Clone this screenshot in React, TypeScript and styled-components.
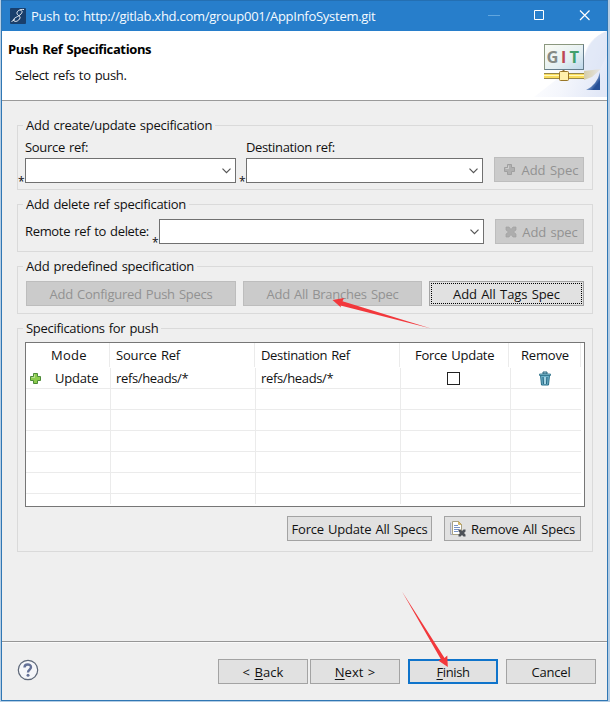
import React from "react";
import styled, { createGlobalStyle, css } from "styled-components";

const GlobalStyle = createGlobalStyle`
  * { box-sizing: border-box; }
  body { margin: 0; background: #b4cde4; }
`;

const Text = styled.span<{ $ls?: number; $ws?: number }>`
  font: 13px/18px "Open Sans", "Noto Sans", sans-serif;
  letter-spacing: ${(p) => p.$ls ?? 0}px;
  word-spacing: ${(p) => p.$ws ?? 1}px;
  white-space: pre;
`;

const Page = styled.div`
  position: relative;
  width: 610px;
  height: 702px;
  padding: 0 2px 1px 1px;
  overflow: hidden;
  color: #111;
`;

const Window = styled.div`
  display: flex;
  flex-direction: column;
  height: 701px;
  border: 1px solid #3077b4;
  border-top-color: #246fb2;
  background: #efefef;
`;

const TitleBar = styled.header`
  display: flex;
  align-items: center;
  flex: none;
  height: 30px;
  padding-left: 8px;
  background: #277ecb;
  color: #f4faff;
  svg { flex: none; }
`;

const TitleText = styled(Text)`
  flex: 1;
  margin-left: 5px;
`;

const WindowControls = styled.div`
  display: flex;
  align-items: center;
  width: 121px;
`;

const Banner = styled.section`
  display: flex;
  justify-content: space-between;
  flex: none;
  height: 70px;
  background: #fff;
  border-bottom: 1px solid #9a9a9a;
`;

const BannerText = styled.div`
  display: flex;
  flex-direction: column;
  gap: 8px;
  padding: 9px 0 0 6px;
`;

const Heading = styled(Text)`
  font-weight: 700;
  color: #000;
`;

const Subtitle = styled(Text)`
  padding-left: 7px;
`;

const Body = styled.main`
  display: flex;
  flex-direction: column;
  flex: 1;
  padding: 24px 14px 0 15px;
`;

const Group = styled.fieldset<{ $height: number; $gap?: number }>`
  position: relative;
  flex: none;
  height: ${(p) => p.$height}px;
  margin: 0 0 ${(p) => p.$gap ?? 0}px;
  padding: 0 8px 0 0;
  border: 1px solid #dadada;
  min-width: 0;
`;

const Legend = styled(Text)`
  position: absolute;
  top: -10px;
  left: 5px;
  padding: 0 3px;
  background: #efefef;
`;

const FieldRow = styled.div<{ $top: number }>`
  display: flex;
  align-items: flex-end;
  padding-top: ${(p) => p.$top}px;
`;

const Field = styled.div<{ $width: number; $ml?: number }>`
  display: flex;
  flex-direction: column;
  width: ${(p) => p.$width}px;
  margin-left: ${(p) => p.$ml ?? 0}px;
`;

const FieldLabel = styled(Text)`
  height: 20px;
  padding-left: 7px;
`;

const InlineLabel = styled(Text)`
  width: 134px;
  height: 22px;
  padding-left: 7px;
`;

const ComboRow = styled.div`
  display: flex;
  align-items: flex-end;
  flex: 1;
`;

const Required = styled.span`
  flex: none;
  width: 7px;
  height: 9px;
  font: 12px/16px "Open Sans", sans-serif;
`;

const Combo = styled.div`
  display: flex;
  align-items: center;
  justify-content: flex-end;
  flex: 1;
  height: 25px;
  padding-right: 4px;
  background: #fff;
  border: 1px solid #707070;
`;

const Button = styled.button<{ $width: number; $ml?: number; $raise?: boolean; $icon?: boolean; $focus?: boolean; $primary?: boolean }>`
  display: flex;
  align-items: center;
  justify-content: center;
  flex: none;
  width: ${(p) => p.$width}px;
  height: 25px;
  margin: 0 0 ${(p) => (p.$raise ? 1 : 0)}px ${(p) => p.$ml ?? 0}px;
  padding: 0 0 0 ${(p) => (p.$icon ? 4 : 0)}px;
  background: #e1e1e1;
  border: 1px solid #a3a3a3;
  color: #111;
  &:disabled {
    background: #cbcbcb;
    border-color: #bdbdbd;
    color: #929292;
  }
  ${(p) => p.$focus && css`
    outline: 1px dotted #000;
    outline-offset: -3px;
  `}
  ${(p) => p.$primary && css`
    border: 2px solid #0f74cb;
  `}
  svg { flex: none; margin-right: 5px; }
`;

const Mnemonic = styled.u`
  text-underline-offset: 2px;
  text-decoration-thickness: 1px;
`;

const Table = styled.div`
  width: 560px;
  height: 165px;
  margin: 13px 0 0 7px;
  background: #fff;
  border: 1px solid #767676;
`;

const Row = styled.div<{ $head?: boolean }>`
  display: grid;
  grid-template-columns: ${(p) => (p.$head ? "84px 145px 145px 109px 72px" : "85px 145px 145px 110px")} 1fr;
  height: ${(p) => (p.$head ? 25 : 21)}px;
  margin-right: 3px;
  border-bottom: 1px solid ${(p) => (p.$head ? "transparent" : "#ebebeb")};
  &:last-child { height: 10px; border-bottom: 0; }
`;

const Cell = styled.div<{ $pl?: number; $last?: boolean }>`
  display: flex;
  align-items: center;
  padding-left: ${(p) => p.$pl ?? 6}px;
  border-right: ${(p) => (p.$last ? "0" : "1px solid #ebebeb")};
  svg { flex: none; }
`;

const UpdateText = styled(Text)`
  margin-left: 13px;
`;

const CheckBox = styled.div`
  width: 13px;
  height: 13px;
  border: 1px solid #222;
  background: #fff;
`;

const TableActions = styled.div`
  display: flex;
  justify-content: flex-end;
  margin-top: 9px;
  padding-right: 3px;
`;

const Footer = styled.footer`
  display: flex;
  align-items: center;
  flex: none;
  height: 59px;
  padding: 1px 11px 0 15px;
  border-top: 1px solid #969696;
  box-shadow: inset 0 1px #fafafa;
`;

const HelpLink = styled.div`
  display: flex;
  flex: 1;
  padding-bottom: 3px;
`;

const Pointers = styled.svg`
  position: absolute;
  inset: 0;
  pointer-events: none;
`;

const AppIcon = () => (
  <svg width="16" height="16" viewBox="0 0 16 16" fill="none">
    <rect width="16" height="16" rx="1" fill="#193f6c" />
    <path d="M14 1.500C10 1 6.500 3 7 5.500S11.500 8 9.500 11 4 14 3.500 12 9 8.500 11 6 12 2.500 10.500 2.500M5 11.500L1.500 13.500" stroke="#e8eef6" strokeWidth="1" />
  </svg>
);

const Chevron = () => (
  <svg width="9" height="6" viewBox="0 0 9 6" fill="none" stroke="#555" strokeWidth="1.200">
    <path d="M.5 .7 4.500 4.700 8.500 .7" />
  </svg>
);

const Plus = ({ fill, stroke }: { fill: string; stroke: string }) => (
  <svg width="13" height="13" viewBox="0 0 13 13">
    <path d="M4.500 1.500h4v3h3v4h-3v3h-4v-3h-3v-4h3z" fill={fill} stroke={stroke} />
    <path d="M5.500 2.500v3h-3" fill="none" stroke="#fff" strokeOpacity=".4" />
  </svg>
);

const Cross = () => (
  <svg width="12" height="12" viewBox="0 0 12 12">
    <path d="M1 1h3l2 2.500L8 1h3v3L8.500 6 11 8v3H8L6 8.500 4 11H1V8l2.500-2L1 4z" fill="#adadad" stroke="#a2a2a2" strokeWidth=".7" />
  </svg>
);

const GitBanner = () => (
  <svg width="73" height="69" viewBox="0 0 73 69">
    <defs>
      <linearGradient id="card" x1="0" y1="0" x2="1" y2="1">
        <stop offset="0" stopColor="#fbfcf4" /><stop offset=".6" stopColor="#e4eff2" /><stop offset="1" stopColor="#bcd6ea" />
      </linearGradient>
      <linearGradient id="wash" x1="0" y1=".3" x2="1" y2=".6">
        <stop offset="0" stopColor="#fff" /><stop offset=".5" stopColor="#f4f6fc" /><stop offset="1" stopColor="#e2e8f7" />
      </linearGradient>
      <linearGradient id="fold" x1="0" y1="0" x2="1" y2="1">
        <stop offset=".4" stopColor="#a9c2e6" /><stop offset=".75" stopColor="#254f96" />
      </linearGradient>
      <linearGradient id="shade" x1="0" y1="0" x2="1" y2="0">
        <stop offset="0" stopColor="#d5cda8" /><stop offset="1" stopColor="#e6e6e8" />
      </linearGradient>
    </defs>
    <path d="M73 0C60 5 52 14 50 27L0 66h73z" fill="url(#wash)" />
    <path d="M73 0C60 5 52 16 50 30v12l16-4 7-14z" fill="#dce4f5" opacity=".6" />
    <path d="M50 40l17-2-9 8-8 3z" fill="url(#shade)" />
    <rect x="10.500" y="13.500" width="39" height="25" fill="url(#card)" stroke="#8b987f" />
    <path d="M11 38.500h38.500v-25" fill="none" stroke="#647c8b" />
    <text x="12.500" y="32" fontFamily="Open Sans" fontSize="16.500" fontWeight="700" fill="#858a85">G</text>
    <text x="27.300" y="32" fontFamily="Liberation Sans" fontSize="17" fontWeight="700" fill="#bd4655">I</text>
    <text x="35.500" y="32" fontFamily="Open Sans" fontSize="16.500" fontWeight="700" fill="#42a06d">T</text>
    <path d="M10 42.500h40M10 47.500h40" stroke="#97884b" />
    <path d="M10 45h40" stroke="#f9dc5c" strokeWidth="4" />
    <path d="M10 44.500h40" stroke="#fffac0" />
    <path d="M29.500 39v2" stroke="#8d7744" strokeWidth="2" />
    <rect x="25.500" y="40.500" width="9" height="9" rx="1" fill="#fff0ac" stroke="#997627" />
    <path d="M66 41v18H52q11-5 14-18z" fill="url(#fold)" />
  </svg>
);

const Trash = () => (
  <svg width="12" height="15" viewBox="0 0 12 15">
    <path d="M4 1h4v2H4z" fill="#b9dce8" stroke="#24637b" />
    <path d="M1.500 4h9L9.500 14h-7z" fill="#6eb4cc" stroke="#286d87" />
    <path d="M.5 3h11v1.500H.5z" fill="#8fcbdc" stroke="#2b6d85" strokeWidth=".8" />
    <path d="M4 6l.4 7M8 6l-.4 7" stroke="#205c78" />
    <path d="M6 6v7" stroke="#d9f1f7" />
  </svg>
);

const RemoveDocs = () => (
  <svg width="16" height="16" viewBox="0 0 16 16">
    <path d="M.5 1.500v12H8" fill="none" stroke="#a5acc2" />
    <path d="M2.500.5h6l3 3v10h-9z" fill="#fff" stroke="#a7a184" />
    <path d="M8.500.5v3h3z" fill="#e6c760" stroke="#b3954a" strokeWidth=".6" />
    <path d="M4 4.500h4M4 6.500h6M4 8.500h5M4 10.500h4" stroke="#7893c6" />
    <path d="M8.500 8.500h2l1.500 1.500 1.500-1.500h2v2L14 12l1.500 1.500v2h-2L12 14l-1.500 1.500h-2v-2L10 12l-1.500-1.500z" fill="#4d5157" />
  </svg>
);

const Help = () => (
  <svg width="22" height="22" viewBox="0 0 22 22">
    <circle cx="11" cy="11" r="9.700" fill="#f5f6f9" stroke="#5d6778" strokeWidth="1.200" />
    <path d="M7.500 8.500C7.500 4.500 14 4.500 14 8.300 14 10.500 11 10.800 11 13.500" fill="none" stroke="#647197" strokeWidth="2.400" />
    <circle cx="11" cy="16.300" r="1.500" fill="#647197" />
  </svg>
);

const ComboField = () => (
  <ComboRow>
    <Required>*</Required>
    <Combo><Chevron /></Combo>
  </ComboRow>
);

export default function App() {
  return (
    <Page>
      <GlobalStyle />
      <Window>
        <TitleBar>
          <AppIcon />
          <TitleText $ls={-0.27}>Push to: http://gitlab.xhd.com/group001/AppInfoSystem.git</TitleText>
          <WindowControls>
            <svg width="121" height="30" viewBox="0 0 121 30" fill="none">
              <path d="M2 14.500h12" stroke="#61a6de" />
              <path d="M48.500 9.500h9v9h-9z" stroke="#fff" />
              <path d="M94 9.500l9.500 9.500M103.500 9.500L94 19" stroke="#fff" strokeWidth="1.200" />
            </svg>
          </WindowControls>
        </TitleBar>

        <Banner>
          <BannerText>
            <Heading $ls={-0.37}>Push Ref Specifications</Heading>
            <Subtitle $ls={-0.33}>Select refs to push.</Subtitle>
          </BannerText>
          <GitBanner />
        </Banner>

        <Body>
          <Group $height={65} $gap={14}>
            <Legend $ls={-0.27}>Add create/update specification</Legend>
            <FieldRow $top={12}>
              <Field $width={218}>
                <FieldLabel $ls={-0.3}>Source ref:</FieldLabel>
                <ComboField />
              </Field>
              <Field $width={244} $ml={3}>
                <FieldLabel $ls={-0.36}>Destination ref:</FieldLabel>
                <ComboField />
              </Field>
              <Button $width={90} $ml={11} $raise $icon disabled>
                <Plus fill="#b0b0b0" stroke="#a0a0a0" /><Text>Add Spec</Text>
              </Button>
            </FieldRow>
          </Group>

          <Group $height={48} $gap={14}>
            <Legend $ls={-0.28}>Add delete ref specification</Legend>
            <FieldRow $top={14}>
              <InlineLabel $ls={-0.33}>Remote ref to delete:</InlineLabel>
              <ComboField />
              <Button $width={89} $ml={11} $icon disabled>
                <Cross /><Text $ls={-0.1}>Add spec</Text>
              </Button>
            </FieldRow>
          </Group>

          <Group $height={48} $gap={14}>
            <Legend $ls={-0.26}>Add predefined specification</Legend>
            <FieldRow $top={14}>
              <Button $width={210} $ml={8} disabled><Text $ls={-0.25}>Add Configured Push Specs</Text></Button>
              <Button $width={179} $ml={7} disabled><Text $ls={-0.25}>Add All Branches Spec</Text></Button>
              <Button $width={155} $ml={7} $focus><Text $ls={-0.08}>Add All Tags Spec</Text></Button>
            </FieldRow>
          </Group>

          <Group $height={224}>
            <Legend $ls={-0.3}>Specifications for push</Legend>
            <Table>
              <Row $head>
                <Cell $pl={25}><Text $ls={0.3}>Mode</Text></Cell>
                <Cell><Text $ls={-0.18}>Source Ref</Text></Cell>
                <Cell><Text $ls={-0.33}>Destination Ref</Text></Cell>
                <Cell $pl={15}><Text $ls={-0.25}>Force Update</Text></Cell>
                <Cell $pl={12}><Text $ls={-0.2}>Remove</Text></Cell>
                <Cell $last />
              </Row>
              <Row>
                <Cell $pl={3}>
                  <Plus fill="#8ccc4c" stroke="#4d8a39" />
                  <UpdateText $ls={-0.2}>Update</UpdateText>
                </Cell>
                <Cell $pl={5}><Text $ls={-0.35}>refs/heads/*</Text></Cell>
                <Cell $pl={5}><Text $ls={-0.35}>refs/heads/*</Text></Cell>
                <Cell $pl={46}><CheckBox /></Cell>
                <Cell $pl={28} $last><Trash /></Cell>
              </Row>
              {[0, 1, 2, 3, 4, 5].map((n) => (
                <Row key={n}><Cell /><Cell /><Cell /><Cell /><Cell $last /></Row>
              ))}
            </Table>
            <TableActions>
              <Button $width={145}><Text $ls={-0.22}>Force Update All Specs</Text></Button>
              <Button $width={137} $ml={12}><RemoveDocs /><Text $ls={-0.2}>Remove All Specs</Text></Button>
            </TableActions>
          </Group>
        </Body>

        <Footer>
          <HelpLink><Help /></HelpLink>
          <Button $width={90}><Text $ls={0.1}>{"< "}<Mnemonic>B</Mnemonic>ack</Text></Button>
          <Button $width={90} $ml={2}><Text><Mnemonic>N</Mnemonic>ext &gt;</Text></Button>
          <Button $width={90} $ml={8} $primary><Text $ls={-0.4}><Mnemonic>F</Mnemonic>inish</Text></Button>
          <Button $width={90} $ml={8}><Text $ls={-0.2}>Cancel</Text></Button>
        </Footer>
      </Window>

      <Pointers width="610" height="702" viewBox="0 0 610 702">
        <path d="M332.500 300l11.500-2-1.500 3.200L431 328.500l-90.500-23 .5 2z" fill="#f2383c" />
        <path d="M402 591.500l42.500 66.500 2.800-2.500.5 11.500-9.500-6.500 2.700-1z" fill="#f2383c" />
      </Pointers>
    </Page>
  );
}
